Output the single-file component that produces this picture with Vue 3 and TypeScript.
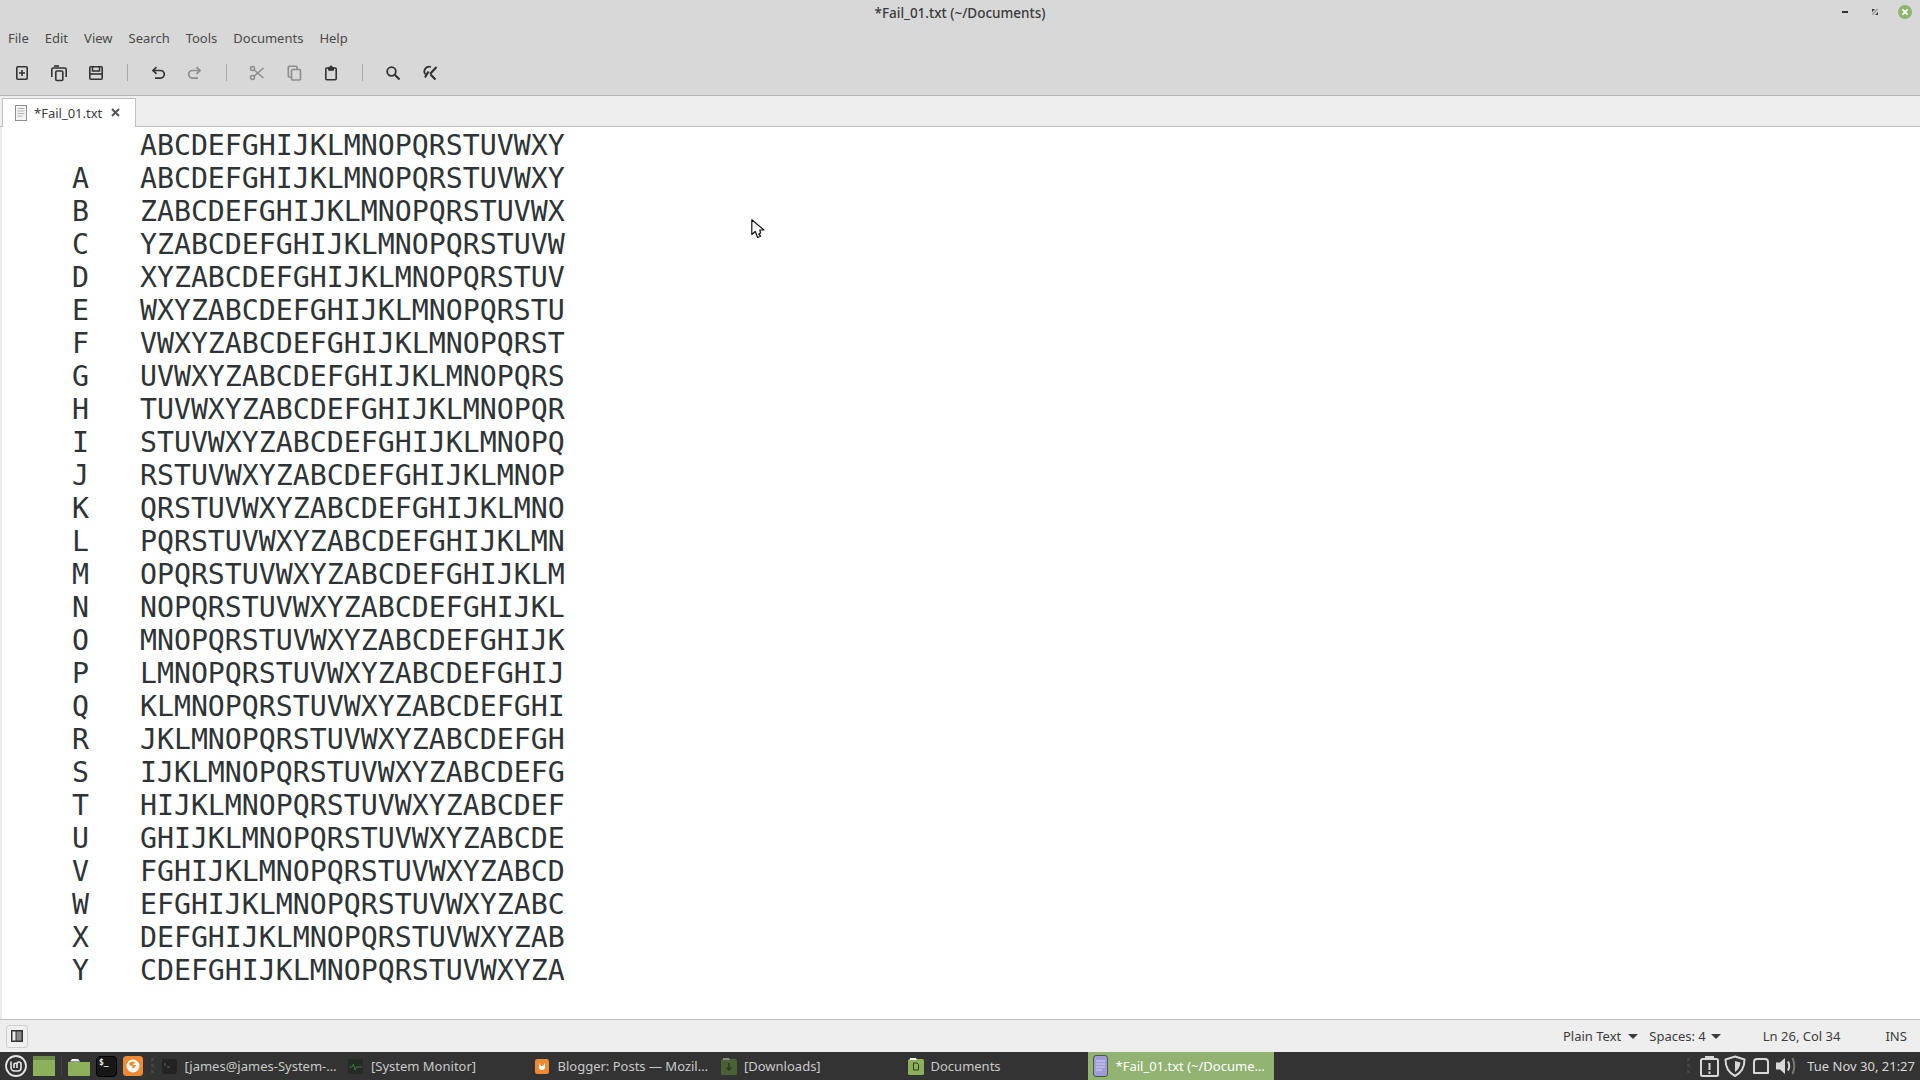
<script setup lang="ts">
const alpha = 'ABCDEFGHIJKLMNOPQRSTUVWXY'
const cycle = 'ABCDEFGHIJKLMNOPQRSTUVWXYZ'
const rows: string[] = ['        ' + alpha]
for (let i = 0; i < 25; i++) {
  const shift = (26 - i) % 26
  const s = (cycle + cycle).slice(shift, shift + 25)
  rows.push('    ' + alpha[i] + '   ' + s)
}
const text = rows.join('\n')
const menus = ['File', 'Edit', 'View', 'Search', 'Tools', 'Documents', 'Help']
const tasks = [
  { label: '[james@james-System-…', kind: 'term' },
  { label: '[System Monitor]', kind: 'mon' },
  { label: 'Blogger: Posts — Mozil…', kind: 'fox' },
  { label: '[Downloads]', kind: 'dl' },
  { label: 'Documents', kind: 'doc' },
  { label: '*Fail_01.txt (~/Docume…', kind: 'txt' },
]
</script>

<template>
  <div class="screen">
    <header class="titlebar">
      <span class="title">*Fail_01.txt (~/Documents)</span>
      <div class="winctl">
        <span class="min"></span>
        <svg class="restore" width="6" height="6" viewBox="0 0 8 8"><path d="M0 4L4 0H0zM4 8L8 4V8z" fill="#333"/><path d="M1 8L8 1V0H6L0 6V8z" fill="#333" opacity=".35"/></svg>
        <svg class="close" width="14" height="14" viewBox="0 0 14 14"><circle cx="7" cy="7" r="7" fill="#8fb46d"/><path d="M4.4 4.4L9.6 9.6M9.6 4.4L4.4 9.6" stroke="#fff" stroke-width="1.8"/></svg>
      </div>
    </header>

    <nav class="menubar">
      <span v-for="m in menus" :key="m" class="menu">{{ m }}</span>
    </nav>

    <div class="toolbar">
      <button class="tool"><svg width="16" height="16" viewBox="0 0 16 16" fill="none" stroke="#333" stroke-width="1.6"><rect x="2.8" y="1.8" width="10.4" height="12.4" rx="1"/><path d="M8 5v6M5 8h6"/></svg></button>
      <button class="tool"><svg width="18" height="18" viewBox="0 0 18 18" fill="none" stroke="#333" stroke-width="1.6"><path d="M1.8 13V5.5Q1.800 4 3.300 4H14.500Q16.200 4 16.200 5.500V13"/><path d="M4 2h5" /><rect x="5.800" y="7" width="7" height="9.500" rx="1"/></svg></button>
      <button class="tool"><svg width="16" height="16" viewBox="0 0 16 16" fill="none" stroke="#333" stroke-width="1.6"><rect x="1.800" y="1.800" width="12.400" height="12.400" rx="1"/><path d="M4.500 2v4h7V2" /><path d="M2 9h12" /></svg></button>
      <span class="sep"></span>
      <button class="tool"><svg width="16" height="16" viewBox="0 0 16 16" fill="none" stroke="#333" stroke-width="1.700"><path d="M4 5.500h6.500a3.800 3.800 0 0 1 0 7.600H5"/><path d="M6.500 2.200L3 5.500l3.500 3.300"/></svg></button>
      <button class="tool"><svg width="16" height="16" viewBox="0 0 16 16" fill="none" stroke="#8c8c8c" stroke-width="1.700"><path d="M12 5.500H5.500a3.800 3.800 0 0 0 0 7.600H11"/><path d="M9.500 2.200L13 5.500 9.500 8.800"/></svg></button>
      <span class="sep"></span>
      <button class="tool"><svg width="16" height="16" viewBox="0 0 16 16" fill="none" stroke="#8c8c8c" stroke-width="1.500"><circle cx="3.500" cy="3.500" r="2"/><circle cx="3.500" cy="12.500" r="2"/><path d="M5 4.800L14.500 13M5 11.200L14.500 3"/></svg></button>
      <button class="tool"><svg width="16" height="16" viewBox="0 0 16 16" fill="none" stroke="#8c8c8c" stroke-width="1.600"><path d="M11 4V2.300a1 1 0 0 0-1-1H3.300a1 1 0 0 0-1 1V11a1 1 0 0 0 1 1H5"/><rect x="5.500" y="4.500" width="9" height="10.500" rx="1"/></svg></button>
      <button class="tool"><svg width="16" height="16" viewBox="0 0 16 16" fill="none" stroke="#333" stroke-width="1.600"><rect x="2.800" y="3" width="10.400" height="11.800" rx="1"/><path d="M5.500 5.200V2.700h1.500V1.200h2v1.500h1.500v2.500z" fill="#333" stroke-width="1"/></svg></button>
      <span class="sep"></span>
      <button class="tool"><svg width="16" height="16" viewBox="0 0 16 16" fill="none" stroke="#333" stroke-width="1.800"><circle cx="6.500" cy="6.500" r="4.300"/><path d="M9.800 9.800L14.500 14.500" stroke-width="2.200"/></svg></button>
      <button class="tool"><svg width="16" height="16" viewBox="0 0 16 16" fill="none" stroke="#333" stroke-width="1.800"><path d="M9 2A4.800 4.800 0 0 0 3.500 9.500"/><path d="M6.500 6.500L3 12.500M8.500 9.500l5 5" stroke-width="2.200"/><path d="M8 9L14.500 2" stroke-width="2.200"/></svg></button>
    </div>

    <div class="tabbar">
      <div class="tab">
        <svg width="12" height="16" viewBox="0 0 12 16"><rect x=".5" y=".5" width="11" height="15" fill="#f4f4f4" stroke="#8e8e8e"/><path d="M2.500 3.500h7M2.500 6h7M2.500 8.500h7M2.500 11h5" stroke="#b0b0b0" stroke-width="1.200"/></svg>
        <span class="tabname">*Fail_01.txt</span>
        <svg class="tabx" width="9" height="9" viewBox="0 0 9 9"><path d="M1 1l7 7M8 1L1 8" stroke="#555" stroke-width="2"/></svg>
      </div>
    </div>

    <main class="editor">
      <pre class="code">{{ text }}</pre>
      <svg class="pointer" width="14" height="21" viewBox="0 0 14 21"><path d="M.800.800V15.500l3.500-3 2.300 6 3-1.300-1.800-2.200 1.800-1-.8-3H13z" fill="#fff" stroke="#111" stroke-width="1.200" stroke-linejoin="round"/></svg>
    </main>

    <footer class="statusbar">
      <button class="side"><svg width="12" height="12" viewBox="0 0 12 12"><rect width="12" height="12" fill="#333"/><rect x="1.500" y="1.500" width="3" height="9" fill="#eee"/><rect x="5.500" y="1.500" width="5" height="9" fill="#888"/></svg></button>
      <span class="st st-plain">Plain Text</span><i class="caret"></i>
      <span class="st st-spaces">Spaces: 4</span><i class="caret caret2"></i>
      <span class="st st-ln">Ln 26, Col 34</span>
      <span class="st st-ins">INS</span>
    </footer>

    <div class="panel">
      <div class="launchers">
        <svg class="l-mint" width="22" height="22" viewBox="0 0 22 22" fill="none" stroke="#e6e6e6"><circle cx="11" cy="11" r="10" stroke-width="1.800"/><path d="M6 6.500v6a3.500 3.500 0 0 0 3.500 3.500h3.500a3 3 0 0 0 3-3V9a2 2 0 0 0-4 0v4M9 13V9a1.800 1.800 0 0 1 3 0" stroke-width="1.600"/></svg>
        <svg class="l-desk" width="22" height="20" viewBox="0 0 22 20"><rect width="22" height="20" fill="#8cb05b"/><rect width="22" height="4" fill="#6d8c49"/></svg>
        <span class="l-sep"></span>
        <svg class="l-folder" width="22" height="18" viewBox="0 0 22 18"><path d="M0 4h22v13a1 1 0 0 1-1 1H1a1 1 0 0 1-1-1z" fill="#8cb05b"/><path d="M4 1h6l2 2.500H2z" fill="#f2f2f2"/></svg>
        <span class="l-term">$_</span>
        <svg class="l-fox" width="20" height="20" viewBox="0 0 20 20"><rect width="20" height="20" rx="3.500" fill="#ef8a34"/><circle cx="10" cy="10" r="6.500" fill="#fff"/><path d="M6 7q4-3 7 0-3 0-3 2h3q-1 4-5 3 3-1 1-2-3 0-3-3z" fill="#ef8a34"/></svg>
        <span class="l-dots"></span>
      </div>
      <div class="tasks">
        <div v-for="t in tasks" :key="t.kind" class="task" :class="{ active: t.kind === 'txt' }">
          <span class="ticon">
            <svg v-if="t.kind === 'term'" width="15" height="15" viewBox="0 0 15 15"><rect width="15" height="15" rx="3" fill="#232323"/><path d="M3 4v3M5 8h3" stroke="#666"/></svg>
            <svg v-else-if="t.kind === 'mon'" width="15" height="15" viewBox="0 0 15 15"><rect width="15" height="15" rx="2" fill="#252a25"/><path d="M1 8h3l1.500-3 1.500 6 1.500-3H14" fill="none" stroke="#3c7a3c"/></svg>
            <svg v-else-if="t.kind === 'fox'" width="14" height="15" viewBox="0 0 14 15"><rect width="14" height="15" rx="2.500" fill="#ef8a34"/><path d="M4 4v4a3 3 0 0 0 6 0V4l-2 3H6z" fill="#fff"/></svg>
            <svg v-else-if="t.kind === 'dl'" width="16" height="18" viewBox="0 0 16 18"><rect y="2" width="16" height="16" rx="1.500" fill="#4a6136"/><path d="M2 1h6l1 2H2z" fill="#8a8a8a"/><path d="M8 6v7M5.500 10.500L8 13l2.500-2.500" stroke="#2c3b20" fill="none" stroke-width="1.500"/></svg>
            <svg v-else-if="t.kind === 'doc'" width="16" height="18" viewBox="0 0 16 18"><rect y="2" width="16" height="16" rx="1.500" fill="#8cb05b"/><path d="M2 1h6l1 2H2z" fill="#f2f2f2"/><path d="M5.500 6h3.500l1.500 1.500V13H5.500z" fill="none" stroke="#2c3b20"/></svg>
            <svg v-else width="15" height="22" viewBox="0 0 15 22"><rect x=".5" y=".5" width="14" height="21" rx="2.500" fill="#a09cd8" stroke="#4d5a45"/><path d="M3 6h9M3 9h9M3 12h9M3 15h6" stroke="#d4d2ee"/></svg>
          </span>
          <span class="tlabel">{{ t.label }}</span>
        </div>
      </div>
      <div class="tray">
        <span class="l-dots"></span>
        <svg class="t1" width="19" height="22" viewBox="0 0 19 22" fill="none" stroke="#d8d8d8" stroke-width="2"><rect x="1" y="4" width="17" height="17" rx="1.500"/><path d="M6 4.500V2h7v2.500"/><path d="M9.500 8v7M9.500 16.500v2.500"/></svg>
        <svg class="t2" width="22" height="22" viewBox="0 0 22 22" fill="none" stroke="#d8d8d8" stroke-width="2"><path d="M11 1.500L20.500 4.500C20.500 13 17 18 11 21 5 18 1.500 13 1.500 4.500z"/><path d="M11 6L16.500 7.500C16 12 14 15 11 17z" fill="#d8d8d8" stroke="none"/></svg>
        <svg class="t3" width="18" height="18" viewBox="0 0 18 18" fill="none" stroke="#d8d8d8" stroke-width="2"><path d="M2 16V5Q2 2 5 2H13Q16 2 16 5V16z" stroke-linejoin="round"/></svg>
        <svg class="t4" width="21" height="20" viewBox="0 0 21 20"><path d="M0 6.500h4L9 2v16l-5-4.500H0z" fill="#d8d8d8"/><path d="M12 5.500q2.500 4.500 0 9" fill="none" stroke="#d8d8d8" stroke-width="2"/><path d="M16.500 2q3.500 8 0 16" fill="none" stroke="#777" stroke-width="2"/></svg>
        <span class="clock">Tue Nov 30, 21:27</span>
      </div>
    </div>
  </div>
</template>

<style scoped>
.screen {
  width: 1920px;
  height: 1080px;
  display: flex;
  flex-direction: column;
  overflow: hidden;
  position: relative;
  font-family: "Noto Sans", sans-serif;
  background: #fff;
}
.titlebar {
  height: 26px;
  flex: none;
  background: #d8d8d8;
  display: flex;
  align-items: center;
  justify-content: center;
  position: relative;
}
.title { font-size: 13.5px; font-weight: 500; color: #3a3a3a; }
.winctl {
  position: absolute;
  right: 8px;
  top: 5px;
  display: flex;
  align-items: center;
}
.min { width: 6px; height: 2px; background: #333; margin-right: 24px; }
.restore { margin-right: 20px; }
.menubar {
  height: 26px;
  flex: none;
  box-sizing: border-box;
  background: #d8d8d8;
  padding-bottom: 2px;
  display: flex;
  align-items: center;
  font-size: 13px;
  color: #4a4a4a;
}
.menu { padding: 0 8px; }
.toolbar {
  height: 44px;
  flex: none;
  box-sizing: border-box;
  background: #d8d8d8;
  border-bottom: 1px solid #b5b5b5;
  padding: 0 0 2px 3.500px;
  display: flex;
  align-items: center;
}
.tool {
  width: 37px;
  height: 24px;
  padding: 0;
  border: 0;
  background: none;
  display: flex;
  align-items: center;
  justify-content: center;
}
.sep { width: 1px; height: 17px; background: #a8a8a8; margin: 0 12px; }
.tabbar {
  height: 31px;
  flex: none;
  box-sizing: border-box;
  background: #eeeeee;
  border-bottom: 1px solid #c0c0c0;
  padding: 2px 0 0 2px;
  display: flex;
}
.tab {
  width: 134px;
  height: 30px;
  box-sizing: border-box;
  background: #fff;
  border: 1px solid #c0c0c0;
  border-bottom: 0;
  padding: 0 0 2px 12px;
  display: flex;
  align-items: center;
  font-size: 13px;
  color: #3c3c3c;
}
.tabname { margin-left: 7px; }
.tabx { margin-left: 9px; }
.editor {
  flex: 1;
  position: relative;
  background: #fff;
  border-left: 2px solid #ececec;
  min-height: 0;
}
.code {
  margin: 0;
  padding: 2px 0 0 2px;
  font-family: "DejaVu Sans Mono", monospace;
  font-size: 28.23px;
  line-height: 33px;
  color: #2e3436;
}
.pointer { position: absolute; left: 749px; top: 92px; }
.statusbar {
  height: 33px;
  flex: none;
  box-sizing: border-box;
  background: #eeeeee;
  border-top: 1px solid #bdbdbd;
  display: flex;
  align-items: center;
  font-size: 13px;
  color: #3c3c3c;
  padding-left: 6px;
}
.side {
  width: 22px;
  height: 23px;
  padding: 0;
  box-sizing: border-box;
  border: 1px solid #cfcfcf;
  border-radius: 3px;
  background: #f0f0f0;
  display: flex;
  align-items: center;
  justify-content: center;
}
.st { white-space: nowrap; }
.st-plain { margin-left: 1535px; }
.caret {
  width: 0;
  height: 0;
  border: 5px solid transparent;
  border-top: 5px solid #3c3c3c;
  border-bottom: 0;
  margin-left: 7px;
}
.caret2 { margin-left: 5px; }
.st-spaces { margin-left: 11px; }
.st-ln { margin-left: 42px; }
.st-ins { margin-left: 45px; }
.panel {
  height: 28px;
  flex: none;
  background: #333333;
  display: flex;
  align-items: center;
}
.launchers {
  width: 155px;
  flex: none;
  display: flex;
  align-items: center;
  padding-left: 5px;
  box-sizing: border-box;
}
.l-desk { margin-left: 6px; }
.l-sep { width: 1px; height: 20px; background: #444; margin: 0 6px; }
.l-folder { margin-top: 2px; }
.l-term {
  width: 21px;
  height: 21px;
  margin-left: 6px;
  box-sizing: border-box;
  background: #171717;
  border: 1px solid #000;
  border-radius: 4px;
  color: #eee;
  font: 700 8px/12px "DejaVu Sans Mono", monospace;
  padding-left: 2px;
}
.l-fox { margin-left: 6px; }
.l-dots {
  width: 3px;
  height: 16px;
  margin-left: 8px;
  background: repeating-linear-gradient(#444 0 3px, transparent 3px 6px);
}
.tasks { display: flex; align-items: stretch; height: 28px; }
.task {
  width: 186.500px;
  box-sizing: border-box;
  padding-left: 6.500px;
  display: flex;
  align-items: center;
  color: #c9c9c9;
  font-size: 13px;
  white-space: nowrap;
}
.ticon { width: 23px; flex: none; display: flex; align-items: center; }
.task.active { background: #92b372; color: #fff; padding-left: 5px; }
.tray {
  position: absolute;
  right: 5px;
  bottom: 0;
  height: 28px;
  display: flex;
  align-items: center;
}
.tray .l-dots { margin-right: 10px; }
.t1 { margin-right: 5px; }
.t2 { margin-right: 6px; }
.t3 { margin-right: 6px; }
.t4 { margin-right: 10px; }
.clock { font-size: 13px; color: #d8d8d8; }
</style>

<style>
html, body { margin: 0; background: #fff; }
</style>
